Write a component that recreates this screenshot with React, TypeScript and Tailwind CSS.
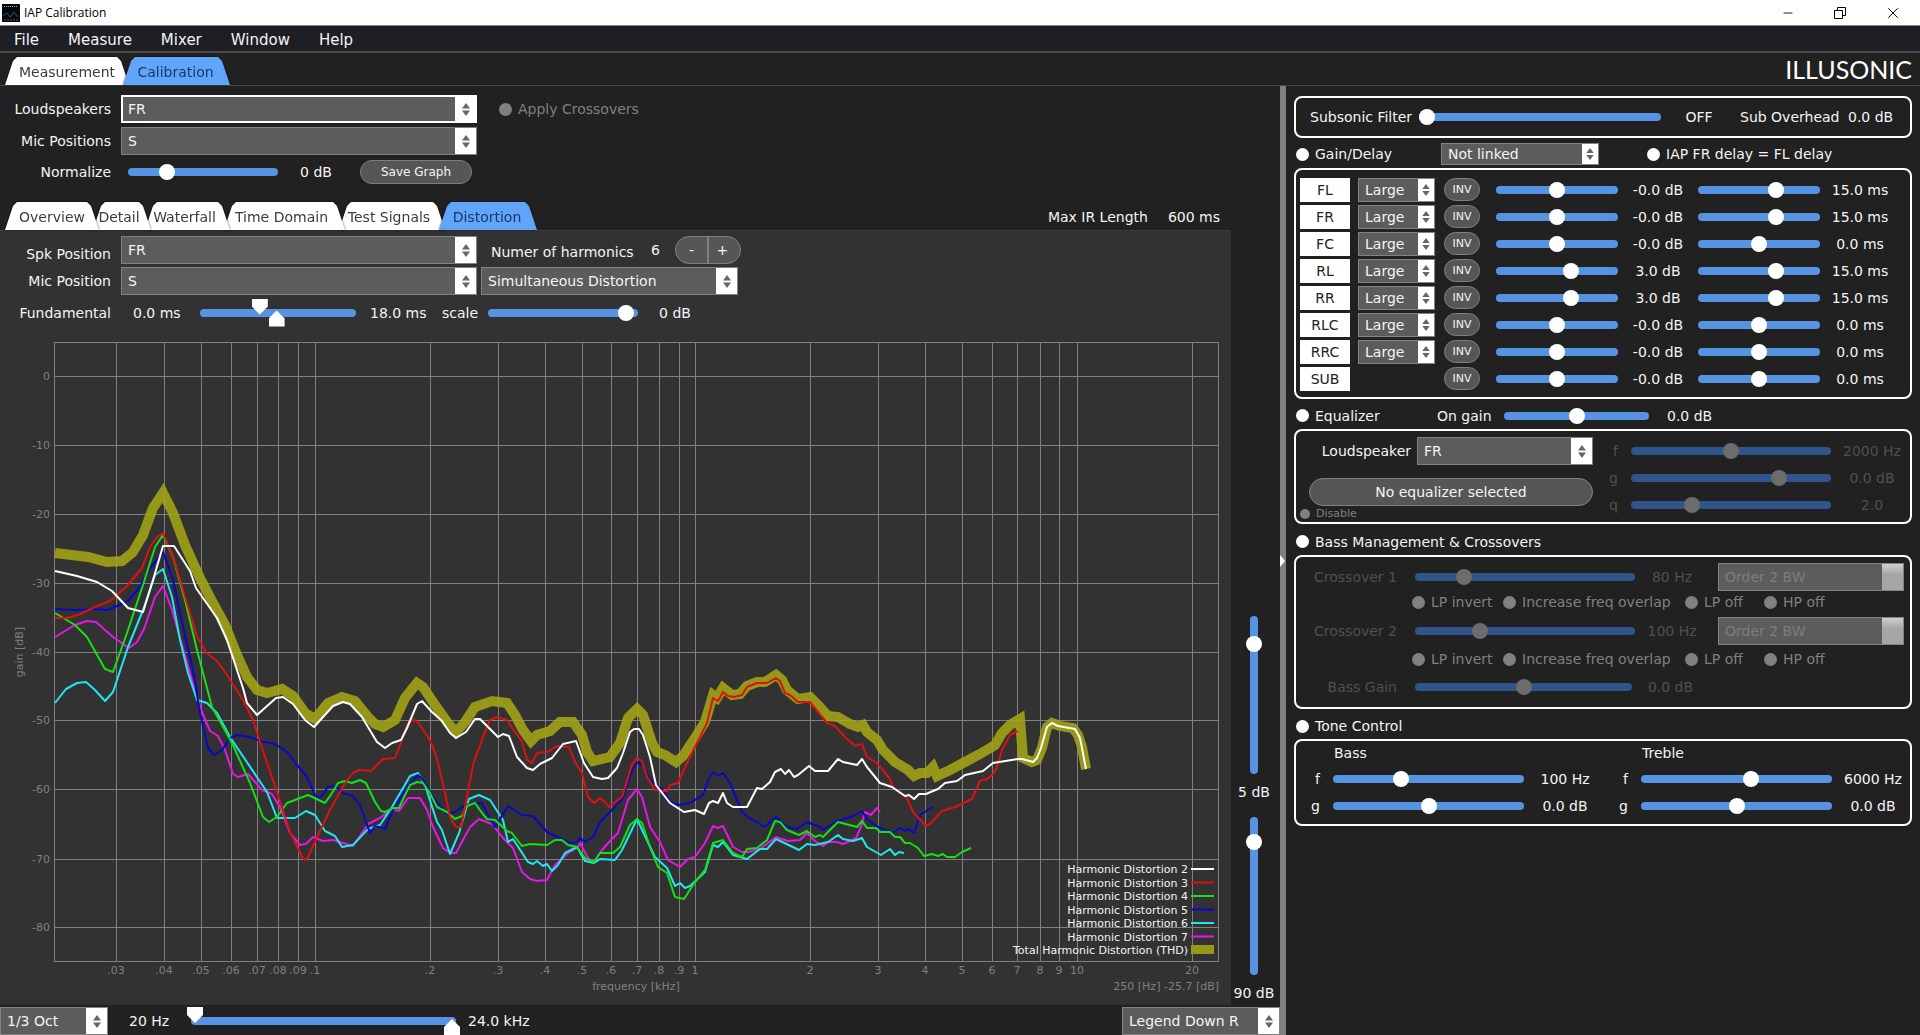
import { useId, type ReactNode } from "react"
import { Minus, X } from "lucide-react"

const grid = [
  [116, ".03"], [164, ".04"], [201, ".05"], [231, ".06"], [257, ".07"], [278, ".08"], [298, ".09"], [315, ".1"],
  [430, ".2"], [498, ".3"], [545, ".4"], [582, ".5"], [611, ".6"], [637, ".7"], [659, ".8"], [679, ".9"], [695, "1"],
  [810, "2"], [878, "3"], [925, "4"], [962, "5"], [992, "6"], [1017, "7"], [1040, "8"], [1059, "9"], [1077, "10"], [1192, "20"],
] as const

const levels = [[376, "0"], [445, "-10"], [514, "-20"], [583, "-30"], [652, "-40"], [720, "-50"], [789, "-60"], [859, "-70"], [927, "-80"]] as const

const thd =
  "55,553 88,557 107,562 122,561 133,552 143,535 153,508 163,493 173,513 185,545 200,578 213,603 225,625 237,655 247,677 257,690 267,693 282,689 293,696 305,713 315,719 328,703 342,697 355,701 368,717 375,724 383,727 395,720 405,698 417,683 423,687 435,705 447,722 456,732 465,722 475,707 492,701 507,703 515,715 523,730 531,741 537,735 550,731 560,722 573,722 582,735 587,752 593,761 610,757 620,743 628,718 637,709 643,715 652,743 657,752 665,755 676,762 683,756 695,738 705,722 713,695 717,698 723,688 732,695 740,694 747,686 757,682 765,682 776,675 782,680 787,690 798,699 810,697 818,705 828,716 838,717 850,724 858,727 863,725 867,732 877,740 883,750 895,762 908,770 914,776 920,773 927,773 933,767 937,776 950,770 963,763 980,754 995,745 1002,733 1010,725 1020,719 1023,758 1032,762 1037,760 1042,748 1047,727 1052,723 1060,726 1073,728 1078,735 1082,747 1086,769"

// drawn back to front, the legend lists them the other way round
const curves = [
  {
    name: "Harmonic Distortion 7",
    color: "#e815e8",
    points:
      "55,637 75,625 87,621 96,622 113,637 129,648 137,642 144,629 155,597 163,586 172,610 192,680 202,712 210,731 218,736 225,750 233,774 238,777 248,774 262,790 272,794 280,807 290,833 300,845 306,844 313,837 323,841 333,840 353,846 368,824 380,818 392,809 399,811 408,798 420,798 427,810 433,827 443,848 450,853 456,853 470,827 479,819 492,824 503,838 513,848 522,872 530,879 537,881 547,880 555,865 568,853 577,848 580,843 588,858 594,862 602,850 610,841 618,833 628,800 637,789 642,797 650,827 660,842 668,860 680,867 688,859 695,857 705,843 713,826 718,828 723,826 733,847 742,852 748,852 760,849 776,837 788,841 800,840 807,833 815,841 823,846 828,842 837,842 843,844 848,842 856,838 861,827 865,812 871,815 877,808 880,812",
  },
  {
    name: "Harmonic Distortion 6",
    color: "#22e6ee",
    points:
      "55,703 66,689 77,683 86,682 95,690 105,701 113,692 128,647 143,610 155,575 163,569 172,597 180,640 188,673 197,700 207,703 217,713 230,737 267,792 277,818 295,818 306,811 315,815 325,831 335,836 342,847 353,845 368,829 380,825 392,807 410,776 418,773 425,785 437,822 442,830 450,854 459,833 469,799 479,795 490,800 503,820 508,842 513,839 528,862 533,864 537,861 543,866 547,864 552,871 558,865 565,853 577,847 585,861 594,863 600,859 615,860 622,850 637,819 643,832 655,857 667,868 675,886 680,883 685,888 690,886 705,872 713,845 718,847 723,842 733,855 747,859 760,849 767,849 776,839 799,850 807,844 815,845 828,842 838,835 843,839 853,841 862,838 867,847 881,855 890,849 895,855 899,852 904,853",
  },
  {
    name: "Harmonic Distortion 5",
    color: "#0808c8",
    points:
      "55,609 75,610 93,609 108,610 128,601 140,587 150,568 163,552 173,580 183,627 193,670 200,713 208,748 214,755 222,750 230,738 237,735 250,737 260,741 275,744 287,752 297,765 307,777 315,795 320,798 328,787 335,786 343,793 353,796 360,805 370,833 375,826 385,829 393,810 407,787 418,775 423,780 435,800 447,814 455,812 465,805 482,803 487,813 495,827 508,806 522,815 533,816 547,832 570,843 577,842 580,838 585,842 593,837 600,822 610,812 623,798 632,770 638,762 643,765 650,780 663,790 670,802 678,805 690,803 703,795 709,778 713,772 718,776 723,773 730,783 742,812 748,817 765,827 776,817 787,827 797,829 807,822 820,827 823,830 835,822 853,816 862,811 867,819 878,827 893,833 900,828 905,831 909,829 914,833 920,815 933,807",
  },
  {
    name: "Harmonic Distortion 4",
    color: "#14e014",
    points:
      "55,613 75,625 87,637 105,669 113,672 127,633 143,585 155,547 163,535 173,557 185,600 197,650 212,707 232,743 250,783 263,817 269,822 277,817 287,803 308,795 325,803 332,793 338,783 345,781 352,783 360,780 366,783 375,802 381,811 385,812 393,808 399,808 405,795 410,785 417,782 423,783 430,793 437,807 447,812 455,819 462,816 467,806 475,803 482,813 487,819 495,820 507,831 512,833 522,846 530,844 547,845 555,840 562,840 568,845 577,847 585,858 594,862 600,853 613,853 620,847 630,825 637,819 642,823 650,847 658,867 667,873 675,897 684,899 695,882 705,870 713,843 723,840 733,853 742,857 747,849 757,848 767,840 775,821 780,822 787,830 799,835 807,831 815,837 820,835 823,837 838,822 857,827 862,821 867,828 876,828 880,832 890,832 895,837 900,837 905,843 910,843 918,848 924,856 932,854 938,856 943,854 947,857 955,857 962,852 971,848",
  },
  {
    name: "Harmonic Distortion 3",
    color: "#e01010",
    points:
      "55,618 67,618 78,615 95,607 110,601 128,585 142,568 150,547 157,537 163,533 173,557 187,603 197,637 207,653 217,661 225,672 243,700 253,720 260,742 278,795 290,832 302,857 305,860 308,857 317,837 330,810 345,783 353,773 359,770 371,771 383,759 395,758 402,740 407,725 412,720 417,721 428,737 433,747 438,763 445,793 450,817 456,827 461,827 465,807 473,765 483,737 490,720 497,717 507,720 515,732 522,742 527,760 532,763 537,753 547,752 557,746 569,747 575,762 582,773 588,797 594,803 600,798 605,802 609,807 614,803 622,797 625,788 632,764 637,758 642,761 647,777 655,790 667,791 670,785 678,783 685,767 695,747 707,723 713,698 718,701 723,692 728,696 734,697 742,695 747,687 757,683 767,683 776,678 780,681 785,693 790,695 798,702 810,702 827,723 835,726 845,737 855,746 862,744 867,757 877,763 890,779 893,787 907,798 913,812 926,826 930,824 942,811 955,807 972,799 980,781 987,779 993,774 997,767 1002,750 1010,735 1018,731",
  },
  {
    name: "Harmonic Distortion 2",
    color: "#ffffff",
    points:
      "55,571 77,576 97,582 112,591 128,608 143,612 153,580 163,546 174,546 190,571 196,588 217,618 227,640 243,688 247,703 257,715 276,698 283,697 293,704 305,720 314,727 333,706 343,702 350,704 362,717 377,742 385,748 392,743 401,740 407,728 417,704 422,701 432,712 442,721 450,733 456,738 466,732 475,719 480,719 498,737 503,734 509,736 517,757 527,768 533,770 540,764 552,758 563,744 576,741 584,763 593,777 602,779 608,778 617,768 623,753 630,732 634,729 639,729 643,735 650,757 656,785 670,803 684,812 695,810 704,814 709,803 713,801 718,803 723,793 727,803 733,807 747,807 757,788 762,789 770,782 775,772 781,769 785,774 789,770 794,777 798,775 809,766 815,771 828,771 838,759 843,762 857,765 862,759 867,767 880,783 892,787 905,796 909,795 914,799 919,794 926,794 933,791 938,789 945,783 957,781 965,775 983,771 993,763 1018,759 1022,759 1033,762 1037,758 1041,748 1047,727 1052,723 1058,726 1075,729 1080,738 1086,769",
  },
]

const channels = [
  { name: "FL", gain: "-0.0 dB", gainPos: 50, delay: "15.0 ms", delayPos: 66 },
  { name: "FR", gain: "-0.0 dB", gainPos: 50, delay: "15.0 ms", delayPos: 66 },
  { name: "FC", gain: "-0.0 dB", gainPos: 50, delay: "0.0 ms", delayPos: 50 },
  { name: "RL", gain: "3.0 dB", gainPos: 63, delay: "15.0 ms", delayPos: 66 },
  { name: "RR", gain: "3.0 dB", gainPos: 63, delay: "15.0 ms", delayPos: 66 },
  { name: "RLC", gain: "-0.0 dB", gainPos: 50, delay: "0.0 ms", delayPos: 50 },
  { name: "RRC", gain: "-0.0 dB", gainPos: 50, delay: "0.0 ms", delayPos: 50 },
  { name: "SUB", gain: "-0.0 dB", gainPos: 50, delay: "0.0 ms", delayPos: 50 },
]

function Slider({ label, value, className = "", disabled = false }: { label: string; value: number; className?: string; disabled?: boolean }) {
  return (
    <input
      type="range"
      aria-label={label}
      defaultValue={value}
      disabled={disabled}
      className={`m-0 block h-4 shrink-0 appearance-none bg-transparent [&::-webkit-slider-runnable-track]:h-2 [&::-webkit-slider-runnable-track]:rounded-full [&::-webkit-slider-runnable-track]:bg-[#5793e3] [&::-webkit-slider-thumb]:-mt-1 [&::-webkit-slider-thumb]:size-4 [&::-webkit-slider-thumb]:appearance-none [&::-webkit-slider-thumb]:rounded-full [&::-webkit-slider-thumb]:bg-white disabled:[&::-webkit-slider-runnable-track]:bg-[#30558a] disabled:[&::-webkit-slider-thumb]:bg-[#6c6c6c] ${className}`}
    />
  )
}

function VerticalSlider({ label, value }: { label: string; value: number }) {
  return (
    <input
      type="range"
      aria-label={label}
      defaultValue={value}
      className="m-0 block h-[158px] w-4 appearance-none bg-transparent [writing-mode:vertical-lr] [&::-webkit-slider-runnable-track]:w-2 [&::-webkit-slider-runnable-track]:rounded-full [&::-webkit-slider-runnable-track]:bg-[#5793e3] [&::-webkit-slider-thumb]:-ml-1 [&::-webkit-slider-thumb]:size-4 [&::-webkit-slider-thumb]:appearance-none [&::-webkit-slider-thumb]:rounded-full [&::-webkit-slider-thumb]:bg-white"
    />
  )
}

function RangeSlider({ label, from, to, className }: { label: string; from: number; to: number; className: string }) {
  const input =
    "pointer-events-none absolute left-0 m-0 h-4 w-full appearance-none bg-transparent [&::-webkit-slider-thumb]:pointer-events-auto [&::-webkit-slider-thumb]:size-4 [&::-webkit-slider-thumb]:appearance-none [&::-webkit-slider-thumb]:bg-white"
  return (
    <div className={`relative flex h-7 shrink-0 items-center ${className}`}>
      <div className="h-2 grow rounded-full bg-[#5793e3]" />
      <input
        type="range"
        aria-label={`${label} start`}
        defaultValue={from}
        className={`${input} top-0 [&::-webkit-slider-thumb]:[clip-path:polygon(0_0,100%_0,100%_50%,50%_100%,0_50%)]`}
      />
      <input
        type="range"
        aria-label={`${label} end`}
        defaultValue={to}
        className={`${input} bottom-0 [&::-webkit-slider-thumb]:[clip-path:polygon(0_100%,100%_100%,100%_50%,50%_0,0_50%)]`}
      />
    </div>
  )
}

function Select({ id, label, value, className = "h-7", small = false, disabled = false, focused = false }: { id?: string; label?: string; value: string; className?: string; small?: boolean; disabled?: boolean; focused?: boolean }) {
  return (
    <div className={`relative flex shrink-0 ${className}`}>
      <select
        id={id}
        aria-label={label}
        disabled={disabled}
        className={`w-full appearance-none rounded-none bg-[#5c5c5c] outline-none disabled:text-[#7e7e7e] disabled:opacity-100 ${focused ? "border-2 border-white pl-[5px]" : "border border-[#828282] pl-1.5"}`}
      >
        <option>{value}</option>
      </select>
      <span
        className={`pointer-events-none absolute inset-y-px right-px flex items-center justify-center ${small ? "w-4" : "w-[21px]"} ${disabled ? "bg-linear-to-b from-[#d0d0d0] to-[#a6a6a6] to-40%" : "bg-white"}`}
      >
        {!disabled && (
          <svg viewBox="0 0 8 13" className={small ? "h-3 w-2" : "h-[13px] w-2"}>
            <path d="M4 0l4 5.500H0zM4 13l4-5.500H0z" fill="#666" />
          </svg>
        )}
      </span>
    </div>
  )
}

function Check({ label, className = "", size = "size-[13px]", checked = true, disabled = false }: { label: string; className?: string; size?: string; checked?: boolean; disabled?: boolean }) {
  return (
    <label className={`flex items-center gap-1.5 whitespace-nowrap ${disabled ? "text-[#808080]" : ""} ${className}`}>
      <input type="checkbox" defaultChecked={checked} disabled={disabled} className={`m-0 appearance-none rounded-full bg-white disabled:bg-[#808080] ${size}`} />
      {label}
    </label>
  )
}

function Tab({ label, active = false, className }: { label: string; active?: boolean; className: string }) {
  return (
    <div className={`group -ml-1.5 drop-shadow-[0_0_1px_#000a] ${className}`}>
      <button
        role="tab"
        aria-selected={active}
        className={`h-full w-full pt-0.5 whitespace-nowrap [clip-path:polygon(0_100%,8px_4px,12px_0,calc(100%-12px)_0,calc(100%-8px)_4px,100%_100%)] ${active ? "bg-[#61a5fb] pr-0.5 text-[#17386c]" : "bg-white pr-1.5 text-[#3c3c3c] group-first:pr-0"}`}
      >
        {label}
      </button>
    </div>
  )
}

function Box({ children, className = "" }: { children: ReactNode; className?: string }) {
  return <div className={`rounded-lg border-2 border-white ${className}`}>{children}</div>
}

function Chart() {
  return (
    <svg viewBox="0 330 1231 675" className="block w-full" fontSize="11" role="img" aria-label="Harmonic distortion over frequency">
      <g stroke="#808080" shapeRendering="crispEdges">
        {grid.map(([x, name]) => (
          <line key={name} x1={x + 0.5} x2={x + 0.5} y1="342" y2="961" />
        ))}
        {levels.map(([y, name]) => (
          <line key={name} x1="55" x2="1219" y1={y + 0.5} y2={y + 0.5} />
        ))}
        <rect x="54.500" y="342.500" width="1164" height="619" fill="none" />
      </g>
      <g fill="#808080">
        {grid.map(([x, name]) => (
          <text key={name} x={x} y="974" textAnchor="middle">{name}</text>
        ))}
        {levels.map(([y, name]) => (
          <text key={name} x="50" y={y + 4} textAnchor="end">{name}</text>
        ))}
        <text x="636" y="990" textAnchor="middle">frequency [kHz]</text>
        <text x="1219" y="990" textAnchor="end">250 [Hz] -25.7 [dB]</text>
        <text transform="translate(23 652) rotate(-90)" textAnchor="middle">gain [dB]</text>
      </g>
      <polyline points={thd} fill="none" stroke="#a4a414" strokeOpacity="0.880" strokeWidth="10" />
      {curves.map((c) => (
        <polyline key={c.name} points={c.points} fill="none" stroke={c.color} strokeWidth="2" strokeLinejoin="round" />
      ))}
      {[...curves].reverse().map((c, i) => (
        <g key={c.name}>
          <text x="1188" y={873 + i * 13.5} textAnchor="end" fill="#f4f4f4">{c.name}</text>
          <line x1="1191" x2="1214" y1={869 + i * 13.5} y2={869 + i * 13.5} stroke={c.color} strokeWidth="2" />
        </g>
      ))}
      <text x="1188" y="954" textAnchor="end" fill="#f4f4f4">Total Harmonic Distortion (THD)</text>
      <rect x="1191" y="945" width="23" height="9" fill="#97971a" />
    </svg>
  )
}

function Crossover({ name, value, pos }: { name: string; value: string; pos: number }) {
  return (
    <div className="flex h-7 items-center text-[#505050]">
      <span className="w-[101px] text-right">{name}</span>
      <Slider label={name} value={pos} disabled className="ml-[18px] w-[220px]" />
      <span className="w-[74px] text-center">{value}</span>
      <Select label={`${name} order`} value="Order 2 BW" disabled className="ml-[9px] h-7 w-[186px]" />
    </div>
  )
}

function CrossoverFlags({ className }: { className: string }) {
  return (
    <div className={`flex items-center pl-[116px] ${className}`}>
      <Check label="LP invert" disabled className="w-[91px]" />
      <Check label="Increase freq overlap" disabled className="w-[182px]" />
      <Check label="LP off" disabled className="w-[79px]" />
      <Check label="HP off" disabled />
    </div>
  )
}

function ParamRow({ name, label, value, pos, width, disabled = false }: { name: string; label: string; value: string; pos: number; width: string; disabled?: boolean }) {
  return (
    <div className={`flex h-[27px] items-center ${disabled ? "text-[#505050]" : ""}`}>
      <span className="w-[10px] text-right">{name}</span>
      <Slider label={label} value={pos} disabled={disabled} className={`ml-[13px] ${width}`} />
      <span className="w-[82px] text-center">{value}</span>
    </div>
  )
}

export default function App() {
  const id = useId()
  return (
    <div className="flex min-h-screen flex-col bg-[#212121] text-[14px] leading-5 text-[#f4f4f4] [font-family:'DejaVu_Sans',Verdana,sans-serif]">
      <header className="flex h-[26px] items-center border-b border-[#888] bg-white pl-0.5 text-black">
        <svg viewBox="0 0 18 18" className="size-[18px]">
          <rect width="18" height="18" fill="#05080c" />
          <path d="M2 2.500h14" stroke="#aaa" strokeDasharray="1 1" />
          <path d="M1 12l4-3 3 4 4-5 4 5" stroke="#2b5580" fill="none" />
          <path d="M2 16h14" stroke="#555" strokeDasharray="2 1" />
        </svg>
        <h1 className="ml-1 text-[12px] [font-family:'Open_Sans',sans-serif]">IAP Calibration</h1>
        <div className="ml-auto flex h-full items-center">
          <button aria-label="Minimize" className="flex w-[52px] justify-center"><Minus size={14} strokeWidth={1.5} /></button>
          <button aria-label="Restore" className="flex w-[52px] justify-center">
            <svg viewBox="0 0 12 12" className="size-3" fill="none" stroke="#000">
              <path d="M.5 3.500h8v8h-8zM3.500 3V.5h8v8H9" />
            </svg>
          </button>
          <button aria-label="Close" className="flex w-[54px] justify-center"><X size={18} strokeWidth={1.25} /></button>
        </div>
      </header>

      <nav className="flex h-[27px] items-center gap-[29px] border-b-2 border-[#4a4a4a] bg-[#1f1e24] pt-0.5 pl-3.5 text-[15px]">
        <button>File</button>
        <button>Measure</button>
        <button>Mixer</button>
        <button>Window</button>
        <button>Help</button>
      </nav>

      <div className="flex h-[33px] items-end justify-between border-b border-[#484848] pr-2">
        <div role="tablist" className="flex h-7 pl-[11px]">
          <Tab label="Measurement" className="w-[124px]" />
          <Tab label="Calibration" active className="z-10 w-[107px]" />
        </div>
        <div className="text-[25px] leading-8 text-white [font-family:Lato,sans-serif]">ILLUSONIC</div>
      </div>

      <main className="flex grow">
        <section className="flex min-w-0 grow flex-col">
          <div className="flex flex-col gap-1 pt-[9px]">
            <div className="flex items-center">
              <label htmlFor={id + "spk"} className="mr-2.5 w-[111px] text-right">Loudspeakers</label>
              <Select id={id + "spk"} value="FR" focused className="h-7 w-[356px]" />
              <Check label="Apply Crossovers" disabled className="ml-[22px]" />
            </div>
            <div className="flex items-center">
              <label htmlFor={id + "mic"} className="mr-2.5 w-[111px] text-right">Mic Positions</label>
              <Select id={id + "mic"} value="S" className="h-7 w-[356px]" />
            </div>
            <div className="flex h-[26px] items-center">
              <span className="w-[111px] text-right">Normalize</span>
              <Slider label="Normalize" value={23} className="ml-[17px] w-[150px]" />
              <span className="w-[76px] text-center">0 dB</span>
              <button className="ml-1.5 h-6 w-[112px] rounded-full border border-[#808080] bg-[#565656] text-[12px]">Save Graph</button>
            </div>
          </div>

          <div className="mt-[17px] flex h-7 items-center justify-between pr-[60px]">
            <div role="tablist" className="flex h-full pl-[11px]">
              <Tab label="Overview" className="z-50 w-[94px]" />
              <Tab label="Detail" className="z-40 w-[58px]" />
              <Tab label="Waterfall" className="z-30 w-[85px]" />
              <Tab label="Time Domain" className="z-20 w-[121px]" />
              <Tab label="Test Signals" className="z-10 w-[106px]" />
              <Tab label="Distortion" active className="z-20 w-[98px]" />
            </div>
            <div className="flex gap-5 pt-0.5">
              <span>Max IR Length</span>
              <span>600 ms</span>
            </div>
          </div>

          <div className="flex">
            <div className="min-w-0 grow border-t border-[#3c3c3c] bg-[#323232]">
              <div className="flex flex-col gap-[3px] pt-[5px] pb-[3px]">
                <div className="flex items-center">
                  <label htmlFor={id + "dspk"} className="mr-2.5 w-[111px] self-end text-right">Spk Position</label>
                  <Select id={id + "dspk"} value="FR" className="h-7 w-[356px]" />
                  <span className="ml-3.5 w-[160px] pt-1">Numer of harmonics</span>
                  <span>6</span>
                  <div className="ml-[15px] flex h-7 w-[66px] overflow-hidden rounded-full border border-[#808080] bg-[#565656]">
                    <button aria-label="Fewer harmonics" className="w-[33px] border-r-2 border-[#808080]">-</button>
                    <button aria-label="More harmonics" className="grow pr-1">+</button>
                  </div>
                </div>
                <div className="flex items-center">
                  <label htmlFor={id + "dmic"} className="mr-2.5 w-[111px] text-right">Mic Position</label>
                  <Select id={id + "dmic"} value="S" className="h-7 w-[356px]" />
                  <Select label="Distortion view" value="Simultaneous Distortion" className="ml-1 h-7 w-[257px]" />
                </div>
                <div className="flex h-[29px] items-center">
                  <span className="w-[111px] text-right">Fundamental</span>
                  <span className="w-[89px] pl-[22px]">0.0 ms</span>
                  <RangeSlider label="Fundamental" from={37} to={49} className="w-[156px]" />
                  <span className="ml-3.5 w-[72px]">18.0 ms</span>
                  <span>scale</span>
                  <Slider label="scale" value={97} className="ml-2.5 w-[150px]" />
                  <span className="ml-[21px]">0 dB</span>
                </div>
              </div>
              <Chart />
            </div>
            <div className="flex w-[49px] shrink-0 flex-col items-center justify-end pr-[3px] whitespace-nowrap">
              <VerticalSlider label="Upper level" value={14} />
              <span className="mt-2 mb-[15px]">5 dB</span>
              <VerticalSlider label="Level range" value={12} />
              <span className="mt-2 mb-0.5">90 dB</span>
            </div>
          </div>

          <div className="flex h-[30px] items-end">
            <Select label="Smoothing" value="1/3 Oct" className="h-7 w-[108px]" />
            <div className="flex h-7 items-center">
              <span className="w-[79px] pl-[21px]">20 Hz</span>
              <RangeSlider label="Frequency" from={0} to={100} className="w-[273px] px-1" />
              <span className="ml-2">24.0 kHz</span>
            </div>
            <Select label="Legend position" value="Legend Down R" className="ml-auto h-7 w-[158px]" />
          </div>
        </section>

        <div className="flex w-1.5 shrink-0 items-center bg-[#808080]">
          <svg viewBox="0 0 6 12" className="h-3 w-1.5">
            <path d="M0 0l5 6-5 6z" fill="#fff" />
          </svg>
        </div>

        <aside className="w-[634px] shrink-0 pt-2.5 pr-2 pl-2">
          <Box className="flex h-[42px] items-center pl-3.5">
            <span className="w-[109px]">Subsonic Filter</span>
            <Slider label="Subsonic Filter" value={0} className="w-[242px]" />
            <span className="w-[76px] text-center">OFF</span>
            <span className="ml-[3px] w-[108px]">Sub Overhead</span>
            <span>0.0 dB</span>
          </Box>

          <div className="mt-[5px] flex h-[22px] items-center pl-0.5">
            <Check label="Gain/Delay" className="w-[145px]" />
            <Select label="Gain link" value="Not linked" small className="h-[22px] w-[158px]" />
            <Check label="IAP FR delay = FL delay" className="ml-12" />
          </div>
          <Box className="mt-[3px] pt-1.5 pb-[5px] pl-1">
            {channels.map((c) => (
              <div key={c.name} className="flex h-[27px] items-center">
                <span className="h-6 w-[50px] bg-white text-center leading-6 text-[#222]">{c.name}</span>
                <div className="ml-2 w-[77px]">
                  {c.name !== "SUB" && <Select label={`${c.name} size`} value="Large" small className="h-6 w-full" />}
                </div>
                <button className="mr-4 ml-[9px] h-[23px] w-9 rounded-full border border-[#808080] bg-[#565656] text-[11px]">INV</button>
                <Slider label={`${c.name} gain`} value={c.gainPos} className="w-[122px]" />
                <span className="w-20 text-center">{c.gain}</span>
                <Slider label={`${c.name} delay`} value={c.delayPos} className="w-[122px]" />
                <span className="w-20 text-center">{c.delay}</span>
              </div>
            ))}
          </Box>

          <div className="mt-[3px] flex h-[27px] items-center pl-0.5">
            <Check label="Equalizer" className="w-[141px]" />
            <span className="w-[67px]">On gain</span>
            <Slider label="On gain" value={50} className="w-[145px]" />
            <span className="ml-[18px]">0.0 dB</span>
          </div>
          <Box className="flex h-[95px] pt-1.5">
            <div className="w-[297px]">
              <div className="flex items-center">
                <label htmlFor={id + "eq"} className="mr-1.5 w-[115px] text-right">Loudspeaker</label>
                <Select id={id + "eq"} value="FR" className="h-7 w-[176px]" />
              </div>
              <button className="mt-[13px] ml-[13px] block h-7 w-[284px] rounded-full border border-[#808080] bg-[#565656]">No equalizer selected</button>
              <Check label="Disable" disabled size="size-[10px]" className="h-4 pl-1 text-[11px]" />
            </div>
            <div className="pl-[15px]">
              <ParamRow name="f" label="Equalizer frequency" value="2000 Hz" pos={50} width="w-[200px]" disabled />
              <ParamRow name="g" label="Equalizer gain" value="0.0 dB" pos={76} width="w-[200px]" disabled />
              <ParamRow name="q" label="Equalizer q" value="2.0" pos={29} width="w-[200px]" disabled />
            </div>
          </Box>

          <div className="mt-1 flex h-[27px] items-center pl-0.5">
            <Check label="Bass Management & Crossovers" />
          </div>
          <Box className="pt-1.5 pb-1.5">
            <Crossover name="Crossover 1" value="80 Hz" pos={20} />
            <CrossoverFlags className="mb-1 h-[22px]" />
            <Crossover name="Crossover 2" value="100 Hz" pos={28} />
            <CrossoverFlags className="h-7" />
            <div className="flex h-7 items-center text-[#505050]">
              <span className="w-[101px] text-right">Bass Gain</span>
              <Slider label="Bass Gain" value={50} disabled className="ml-[18px] w-[217px]" />
              <span className="w-[77px] text-center">0.0 dB</span>
            </div>
          </Box>

          <div className="mt-1 flex h-[26px] items-center pl-0.5">
            <Check label="Tone Control" />
          </div>
          <Box className="flex pb-[5px] pl-3.5">
            <div className="w-[308px] shrink-0">
              <h2 className="pl-6 leading-6">Bass</h2>
              <ParamRow name="f" label="Bass frequency" value="100 Hz" pos={34} width="w-[191px]" />
              <ParamRow name="g" label="Bass gain" value="0.0 dB" pos={50} width="w-[191px]" />
            </div>
            <div className="shrink-0">
              <h2 className="pl-6 leading-6">Treble</h2>
              <ParamRow name="f" label="Treble frequency" value="6000 Hz" pos={58} width="w-[191px]" />
              <ParamRow name="g" label="Treble gain" value="0.0 dB" pos={50} width="w-[191px]" />
            </div>
          </Box>
        </aside>
      </main>
    </div>
  )
}
